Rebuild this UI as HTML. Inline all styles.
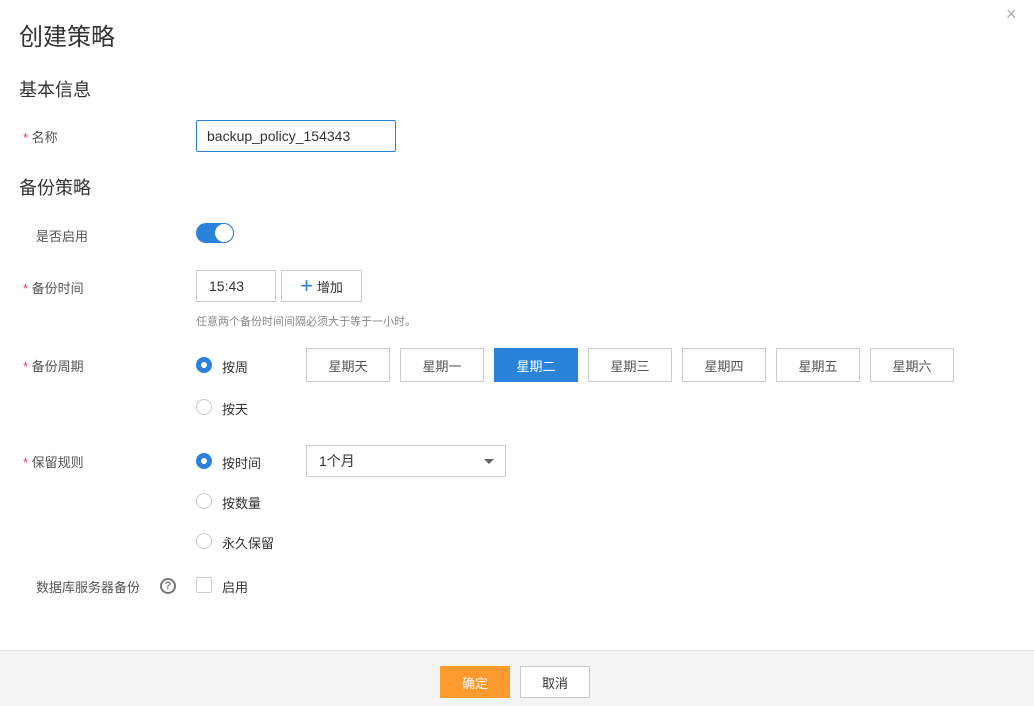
<!DOCTYPE html>
<html><head><meta charset="utf-8"><style>
*{box-sizing:border-box;margin:0;padding:0}
body{width:1034px;height:706px;background:#fff;font-family:"Liberation Sans","Noto Sans CJK SC",sans-serif;color:#333;position:relative;overflow:hidden;font-size:13px}
.a{position:absolute;white-space:nowrap}
.lbl{color:#555;font-size:13px}
.req{color:#e54545;font-size:13px}
.box{position:absolute;border:1px solid #ccc;background:#fff;display:flex;align-items:center;justify-content:center;color:#555;font-size:13px}
.radio{position:absolute;width:16px;height:16px;border:1px solid #ccc;border-radius:50%;background:#fff}
.radio.on{border:5px solid #2a83d8}
</style></head><body>
<div class="a" style="left:19px;top:17px;font-size:24px;color:#333">创建策略</div>
<div class="a" style="left:1006px;top:4px;font-size:18px;color:#aaa">×</div>
<div class="a" style="left:19px;top:76px;font-size:18px;color:#333">基本信息</div>
<div class="a lbl" style="left:23px;top:127px"><span class="req">* </span>名称</div>
<div class="a" style="left:196px;top:120px;width:200px;height:32px;border:1px solid #2a83d8;border-radius:2px;padding:0 10px;line-height:30px;font-size:14px;color:#333">backup_policy_154343</div>
<div class="a" style="left:19px;top:174px;font-size:18px;color:#333">备份策略</div>
<div class="a lbl" style="left:36px;top:226px">是否启用</div>
<div class="a" style="left:196px;top:223px;width:38px;height:20px;border-radius:10px;background:#2a83d8"></div>
<div class="a" style="left:214px;top:223px;width:20px;height:20px;border-radius:50%;background:#fff;border:1px solid #2a83d8"></div>
<div class="a lbl" style="left:23px;top:278px"><span class="req">* </span>备份时间</div>
<div class="box" style="left:196px;top:270px;width:80px;height:32px;justify-content:flex-start;padding-left:12px;font-size:14px;color:#333">15:43</div>
<div class="box" style="left:281px;top:270px;width:81px;height:32px;color:#333"><span style="color:#2a83d8;font-size:22px;margin-right:4px;line-height:1">+</span>增加</div>
<div class="a" style="left:196px;top:313px;font-size:11px;color:#888">任意两个备份时间间隔必须大于等于一小时。</div>
<div class="a lbl" style="left:23px;top:356px"><span class="req">* </span>备份周期</div>
<div class="radio on" style="left:196px;top:357px"></div><div class="a" style="left:222px;top:357px;color:#333">按周</div>
<div class="radio" style="left:196px;top:399px"></div><div class="a" style="left:222px;top:399px;color:#333">按天</div>
<div class="box" style="left:306px;top:348px;width:84px;height:34px">星期天</div>
<div class="box" style="left:400px;top:348px;width:84px;height:34px">星期一</div>
<div class="box" style="left:494px;top:348px;width:84px;height:34px;background:#2a83d8;border-color:#2a83d8;color:#fff">星期二</div>
<div class="box" style="left:588px;top:348px;width:84px;height:34px">星期三</div>
<div class="box" style="left:682px;top:348px;width:84px;height:34px">星期四</div>
<div class="box" style="left:776px;top:348px;width:84px;height:34px">星期五</div>
<div class="box" style="left:870px;top:348px;width:84px;height:34px">星期六</div>
<div class="a lbl" style="left:23px;top:452px"><span class="req">* </span>保留规则</div>
<div class="radio on" style="left:196px;top:453px"></div><div class="a" style="left:222px;top:453px;color:#333">按时间</div>
<div class="box" style="left:306px;top:445px;width:200px;height:32px;justify-content:flex-start;padding-left:12px;font-size:14px;color:#333">1个月</div>
<div class="a" style="left:484px;top:459px;width:0;height:0;border-left:5px solid transparent;border-right:5px solid transparent;border-top:5px solid #666"></div>
<div class="radio" style="left:196px;top:493px"></div><div class="a" style="left:222px;top:493px;color:#333">按数量</div>
<div class="radio" style="left:196px;top:533px"></div><div class="a" style="left:222px;top:533px;color:#333">永久保留</div>
<div class="a lbl" style="left:36px;top:577px">数据库服务器备份</div>
<div class="a" style="left:160px;top:578px;width:16px;height:16px;border:2px solid #777;border-radius:50%;font-size:11px;font-weight:bold;color:#777;text-align:center;line-height:12px">?</div>
<div class="a" style="left:196px;top:577px;width:16px;height:16px;border:1px solid #ccc;border-radius:2px"></div>
<div class="a" style="left:222px;top:577px;color:#333">启用</div>
<div class="a" style="left:0;top:650px;width:1034px;height:56px;background:#f4f4f4;border-top:1px solid #e6e6e6"></div>
<div class="box" style="left:440px;top:666px;width:70px;height:32px;background:#ff9a2e;border-color:#ff9a2e;color:#fff">确定</div>
<div class="box" style="left:520px;top:666px;width:70px;height:32px;color:#333">取消</div>
</body></html>
